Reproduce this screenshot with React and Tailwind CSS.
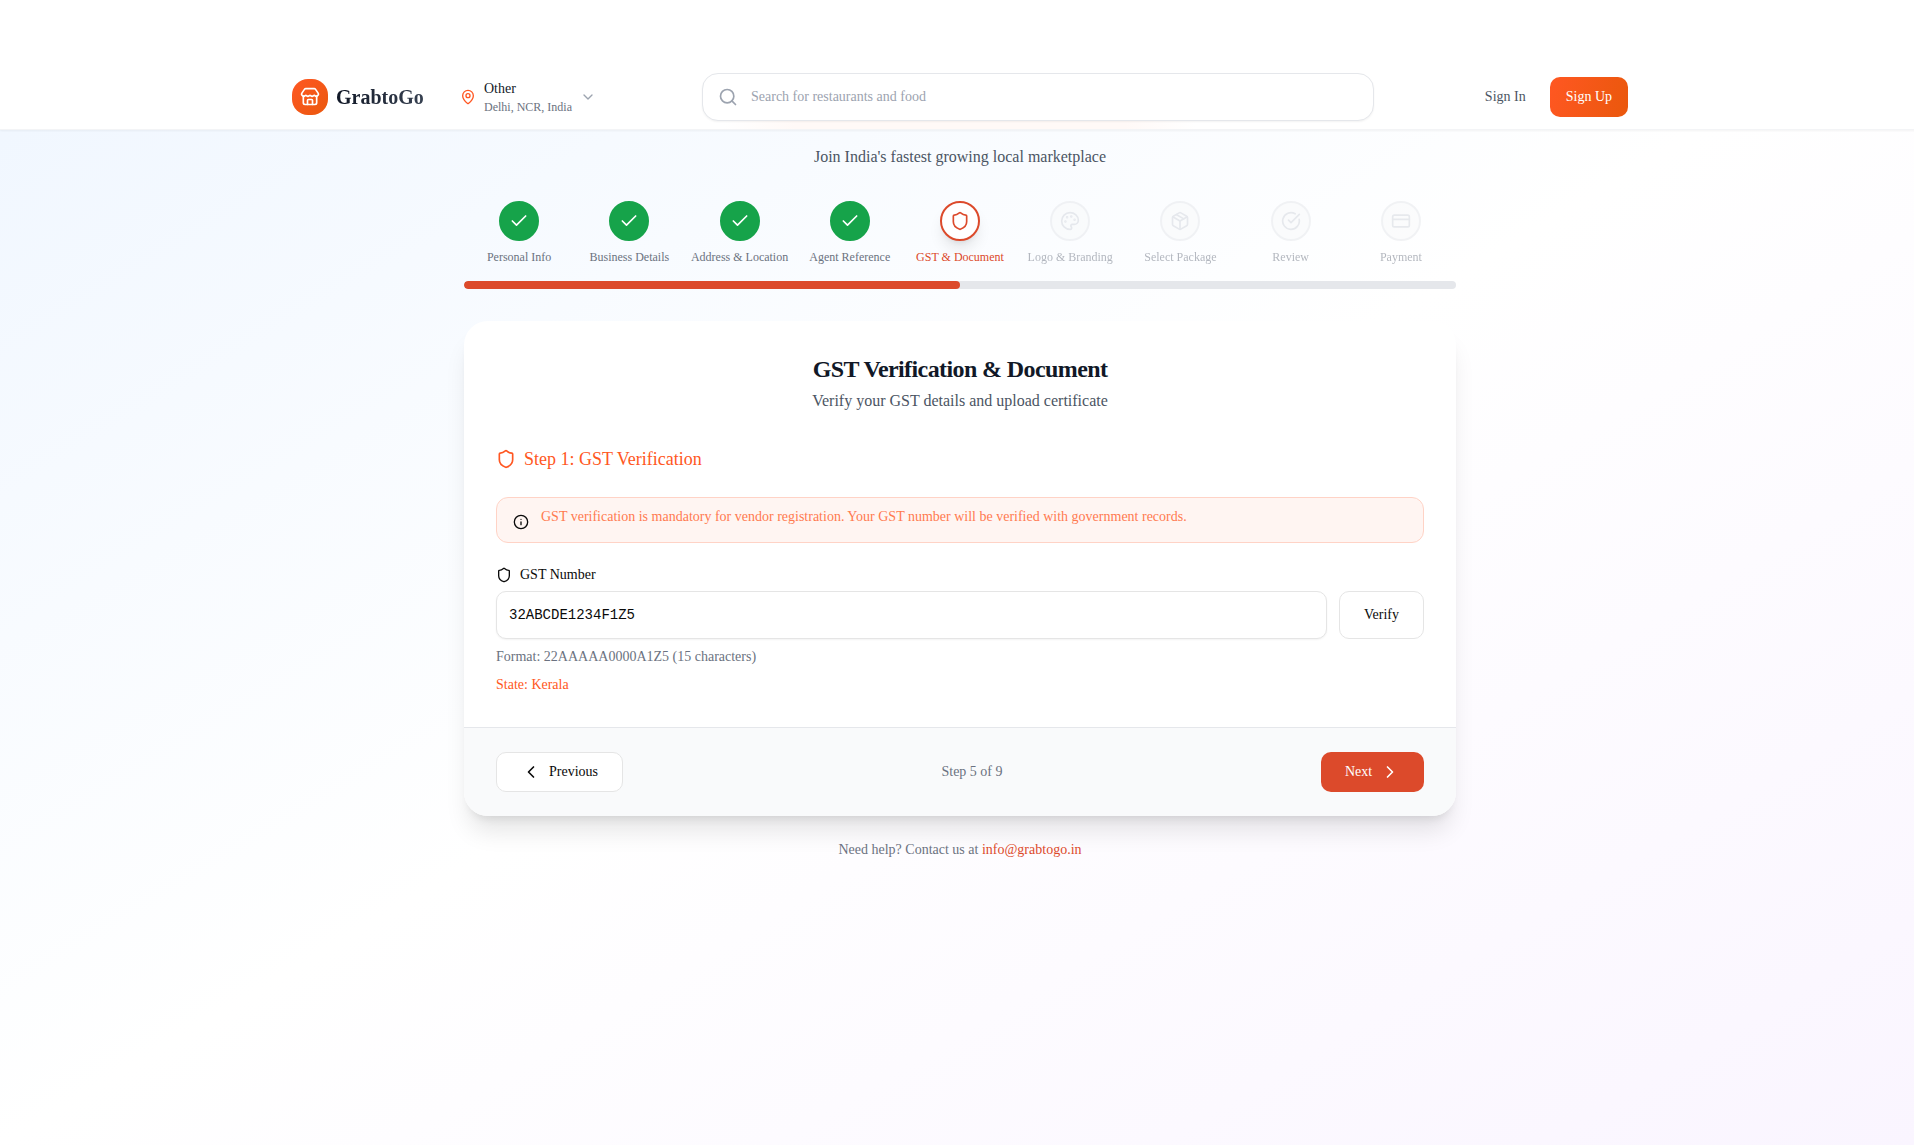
import React from "react";
import {
  Store, MapPin, ChevronDown, Search, Check, Shield, Palette, Package,
  CircleCheckBig, CreditCard, Info, ChevronLeft, ChevronRight,
} from "lucide-react";

const steps = [
  { label: "Personal Info", state: "done", Icon: Check },
  { label: "Business Details", state: "done", Icon: Check },
  { label: "Address & Location", state: "done", Icon: Check },
  { label: "Agent Reference", state: "done", Icon: Check },
  { label: "GST & Document", state: "active", Icon: Shield },
  { label: "Logo & Branding", state: "todo", Icon: Palette },
  { label: "Select Package", state: "todo", Icon: Package },
  { label: "Review", state: "todo", Icon: CircleCheckBig },
  { label: "Payment", state: "todo", Icon: CreditCard },
];

const wrapStyles = {
  done: "text-[#6b7280]",
  active: "text-[#dc4a2b]",
  todo: "text-[#6b7280] opacity-50",
};
const circleStyles = {
  done: "bg-[#16a34a] border-[#16a34a] text-white",
  active: "bg-white border-[#dc4a2b] text-[#dc4a2b] shadow-lg",
  todo: "bg-gray-50 border-gray-200 text-gray-300",
};

function Header() {
  return (
    <header className="relative h-[130px] border-b border-gray-100 bg-white pt-16 shadow-[0_1px_2px_rgba(0,0,0,0.05)]">
      <div className="absolute top-[119px] left-[724px] h-[10px] w-[472px] bg-[linear-gradient(to_right,transparent,#fff9f7_15%,#fff9f7_85%,transparent)]" />
      <div className="relative mx-auto flex h-[66px] w-[1336px] items-center">
        <div className="flex w-[168px] items-center gap-2">
          <div className="flex size-9 items-center justify-center rounded-2xl bg-linear-to-br from-[#ff5722] to-[#ea580c] text-white">
            <Store size={20} />
          </div>
          <span className="bg-linear-to-r from-[#111827] to-[#374151] bg-clip-text text-xl font-bold text-transparent">GrabtoGo</span>
        </div>
        <div className="flex w-[242px] items-center">
          <MapPin size={16} className="text-[#ff5722]" />
          <div className="ml-2 flex flex-col pt-0.5">
            <span className="text-sm leading-[18px] text-[#111827]">Other</span>
            <span className="text-xs leading-[18px] text-[#6b7280]">Delhi, NCR, India</span>
          </div>
          <ChevronDown size={16} className="ml-2 text-[#9ca3af]" />
        </div>
        <div className="flex h-12 w-[672px] items-center rounded-2xl border border-gray-200 bg-white pl-[15px] shadow-[0_1px_2px_rgba(0,0,0,0.05)]">
          <Search size={20} className="text-[#9ca3af]" />
          <span className="ml-[13px] text-sm text-[#9ca3af]">Search for restaurants and food</span>
        </div>
        <div className="ml-auto flex items-center gap-6">
          <span className="text-sm text-[#4b5563]">Sign In</span>
          <button className="h-10 rounded-[10px] bg-[linear-gradient(105deg,#ff5722,#ea580c)] px-4 text-sm text-white">Sign Up</button>
        </div>
      </div>
    </header>
  );
}

function Stepper() {
  return (
    <div>
      <div className="grid grid-cols-9">
        {steps.map(({ label, state, Icon }) => (
          <div key={label} className={"flex flex-col items-center " + wrapStyles[state]}>
            <div className={"flex size-10 items-center justify-center rounded-full border-2 " + circleStyles[state]}>
              <Icon size={20} />
            </div>
            <span className="mt-2 text-xs whitespace-nowrap">{label}</span>
          </div>
        ))}
      </div>
      <div className="mt-4 h-2 overflow-hidden rounded-full bg-[#e5e7eb]">
        <div className="h-full w-1/2 rounded-full bg-[#dc4a2b]" />
      </div>
    </div>
  );
}

function GstCard() {
  return (
    <section className="mt-8 overflow-hidden rounded-3xl bg-white shadow-[0_20px_25px_-5px_rgba(0,0,0,0.1),0_8px_10px_-6px_rgba(0,0,0,0.1)]">
      <div className="p-8">
        <div className="text-center">
          <h2 className="text-2xl leading-8 font-bold tracking-tight text-[#111827]">GST Verification &amp; Document</h2>
          <p className="mt-1 text-base text-[#4b5563]">Verify your GST details and upload certificate</p>
        </div>
        <h3 className="mt-8 flex items-center gap-2 text-lg leading-7 text-[#ff5722]">
          <Shield size={20} />
          Step 1: GST Verification
        </h3>
        <div className="mt-6 flex h-[46px] items-start rounded-xl border border-[#ffd3c6] bg-[#fff5f2] px-4 pt-4">
          <Info size={16} className="text-neutral-950" />
          <p className="-mt-[3px] ml-3 text-sm leading-3 text-[#ff7a50]">
            GST verification is mandatory for vendor registration. Your GST number will be verified with government records.
          </p>
        </div>
        <label className="mt-6 flex h-4 items-center gap-2 text-sm leading-none text-neutral-950">
          <Shield size={16} />
          GST Number
        </label>
        <div className="mt-2 flex gap-3">
          <input
            readOnly
            value="32ABCDE1234F1Z5"
            className="h-12 min-w-0 flex-1 rounded-[10px] border border-neutral-200 bg-white px-3 font-['Liberation_Mono',monospace] text-sm text-neutral-950 shadow-xs outline-none"
          />
          <button className="h-12 w-[85px] rounded-[10px] border border-neutral-200 bg-white text-sm text-neutral-950">Verify</button>
        </div>
        <p className="mt-2 text-sm text-[#6b7280]">Format: 22AAAAA0000A1Z5 (15 characters)</p>
        <p className="mt-2 text-sm text-[#ff5722]">State: Kerala</p>
      </div>
      <div className="flex items-center justify-between border-t border-gray-200 bg-[#f9fafb] px-8 py-6">
        <button className="flex h-10 w-[127px] items-center gap-2 rounded-[10px] border border-neutral-200 bg-white pl-6 text-sm text-neutral-950">
          <ChevronLeft size={20} />
          Previous
        </button>
        <span className="text-sm text-[#6b7280]">Step 5 of 9</span>
        <button className="flex h-10 w-[103px] items-center gap-2 rounded-[10px] bg-[#dc4a2b] pl-6 text-sm text-white">
          Next
          <ChevronRight size={20} />
        </button>
      </div>
    </section>
  );
}

export default function App() {
  return (
    <div className="h-[1145px] overflow-hidden">
      <div className="h-[1145px] w-[1920px] bg-[linear-gradient(to_bottom_right,#eff6ff,#ffffff,#faf5ff)] font-['Liberation_Serif',serif]">
        <Header />
        <main className="mx-auto w-[992px] pt-[15px]">
          <p className="mb-8 text-center text-base text-[#4b5563]">Join India's fastest growing local marketplace</p>
          <Stepper />
          <GstCard />
          <p className="mt-6 text-center text-sm text-[#6b7280]">
            Need help? Contact us at <a className="text-[#dc4a2b]">info@grabtogo.in</a>
          </p>
        </main>
      </div>
    </div>
  );
}
